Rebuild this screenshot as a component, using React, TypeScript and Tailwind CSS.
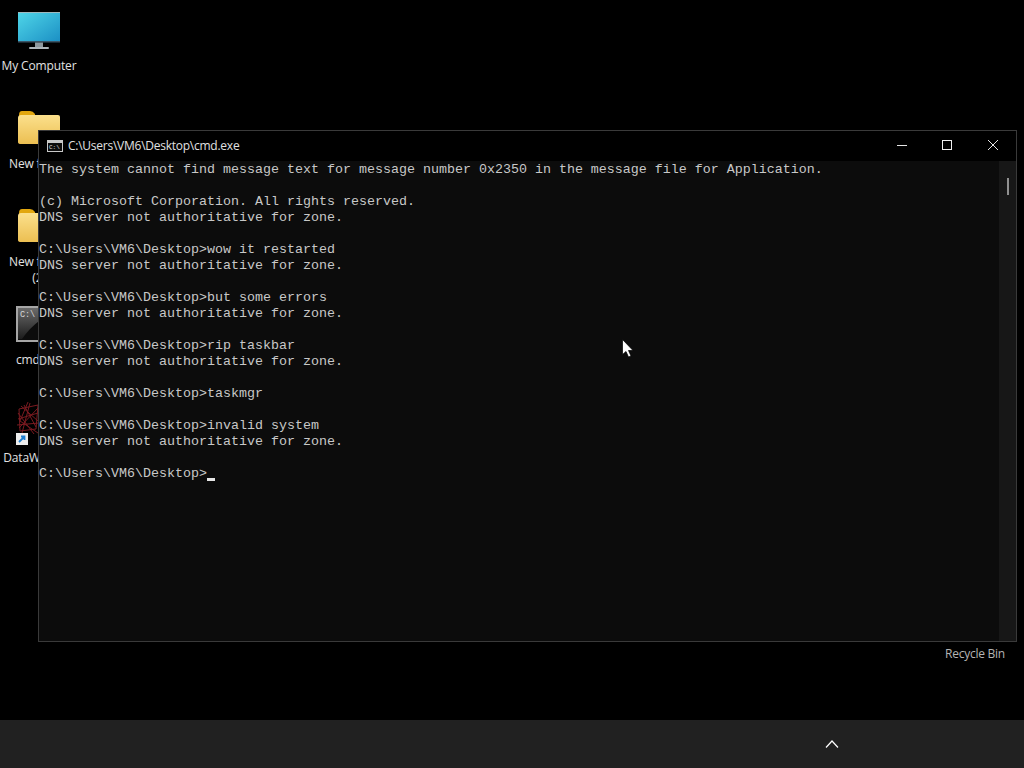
import React from "react";

const lines = [
  "The system cannot find message text for message number 0x2350 in the message file for Application.",
  "",
  "(c) Microsoft Corporation. All rights reserved.",
  "DNS server not authoritative for zone.",
  "",
  "C:\\Users\\VM6\\Desktop>wow it restarted",
  "DNS server not authoritative for zone.",
  "",
  "C:\\Users\\VM6\\Desktop>but some errors",
  "DNS server not authoritative for zone.",
  "",
  "C:\\Users\\VM6\\Desktop>rip taskbar",
  "DNS server not authoritative for zone.",
  "",
  "C:\\Users\\VM6\\Desktop>taskmgr",
  "",
  "C:\\Users\\VM6\\Desktop>invalid system",
  "DNS server not authoritative for zone.",
  "",
];

function Folder() {
  return (
    <svg className="mt-[1px]" width="42" height="34" viewBox="0 0 42 34">
      <defs>
        <linearGradient id="fg" x1="0" y1="0" x2="0" y2="1">
          <stop offset="0" stopColor="#fbe08c" />
          <stop offset="1" stopColor="#ecbf52" />
        </linearGradient>
      </defs>
      <path d="M1 4 Q1 0 4 0 H12 Q15 0 17 3 V5 H1 Z" fill="#e2a70f" />
      <path d="M0 7 Q0 4 3 4 H40 Q42 4 42 6 V32 Q42 33 40 33 H3 Q0 33 0 31 Z" fill="url(#fg)" />
    </svg>
  );
}

function Tile({
  icon,
  label,
  lines2,
  labelClass,
}: {
  icon: React.ReactNode;
  label: string;
  lines2?: string;
  labelClass?: string;
}) {
  return (
    <div className="flex h-[98px] w-[78px] shrink-0 flex-col items-center text-center text-[12px] leading-[17px] tracking-[-0.15px] text-[#e2e2e2]">
      <div className="flex h-[45px] w-full shrink-0 flex-col items-center">{icon}</div>
      <div className={labelClass ?? "whitespace-nowrap"}>{label}</div>
      {lines2 ? <div className="-mt-[1px] whitespace-nowrap">{lines2}</div> : null}
    </div>
  );
}

export default function App() {
  return (
    <div className="flex h-[768px] w-[1024px] flex-col overflow-hidden bg-black font-['Open_Sans','Noto_Sans',sans-serif]">
      <div className="relative flex-1">
        {/* Desktop icon column; the console window lies over its right part */}
        <div className="flex w-[78px] flex-col pt-[12px]">
          <Tile
            label="My Computer"
            icon={
              <svg width="42" height="38" viewBox="0 0 42 38">
                <defs>
                  <linearGradient id="mon" x1="0" y1="0" x2="1" y2="1">
                    <stop offset="0" stopColor="#4fd6e8" />
                    <stop offset="1" stopColor="#1b8fc4" />
                  </linearGradient>
                </defs>
                <rect x="0" y="0" width="42" height="30" rx="1" fill="url(#mon)" />
                <rect x="0" y="0" width="42" height="1" fill="#9fb8bd" />
                <rect x="0" y="29" width="42" height="1.5" fill="#3b5566" />
                <rect x="17" y="30.5" width="8" height="5" fill="#8d989e" />
                <rect x="11" y="35" width="20" height="2" rx="1" fill="#aeb6bb" />
              </svg>
            }
          />
          <Tile label="New folder" icon={<Folder />} />
          <Tile label="New folder" lines2="(2)" icon={<Folder />} />
          <Tile
            label="cmd.exe"
            icon={
              <svg width="46" height="36" viewBox="0 0 46 36">
                <defs>
                  <linearGradient id="sheen" x1="0" y1="0" x2="0" y2="1">
                    <stop offset="0" stopColor="#6a6a6a" />
                    <stop offset="1" stopColor="#1c1c1c" />
                  </linearGradient>
                </defs>
                <rect x="1" y="1" width="44" height="34" fill="#0c0c0c" stroke="#a6a6a6" strokeWidth="2" />
                <path d="M2 2 H44 V6 Q22 10 6 33 H2 Z" fill="url(#sheen)" />
                <text x="4" y="11" fontSize="8.5" fontFamily="Liberation Mono" fill="#d8d8d8">C:\</text>
              </svg>
            }
          />
          <Tile
            label="DataWedge"
            labelClass="mr-[8px] whitespace-nowrap"
            icon={
              <div className="relative -mt-[3px] h-[46px] w-[46px]">
                <svg width="46" height="34" viewBox="0 0 46 34">
                  <g stroke="#7a1a20" strokeWidth="1" fill="none">
                    <path d="M3 8 L22 4 L20 28 L4 30 Z" />
                    <path d="M12 1 L4 20 L22 32 M2 18 L22 12 M8 4 L20 26 M14 2 L6 32 M1 24 L23 22 M5 5 L22 20 M2 12 L18 33 M22 7 L3 27" />
                  </g>
                </svg>
                <svg className="absolute bottom-[2px] left-0" width="12" height="12" viewBox="0 0 12 12">
                  <rect width="12" height="12" fill="#ededed" />
                  <path d="M3 9 L8 4 M5 3.5 H8.5 V7" stroke="#1e7fd0" strokeWidth="1.8" fill="none" />
                </svg>
              </div>
            }
          />
        </div>

        {/* Recycle Bin label: the icon itself is behind the window */}
        <div className="absolute left-[945px] top-[645px] text-[12px] leading-[17px] tracking-[-0.25px] text-[#b4b4b4]">Recycle Bin</div>

        {/* Console window */}
        <div className="absolute left-[38px] top-[130px] flex h-[512px] w-[979px] flex-col border border-[#3a3a3a] bg-black">
          <div className="flex h-[30px] shrink-0 items-center bg-black">
            <svg className="ml-[8px]" width="16" height="14" viewBox="0 0 16 14">
              <rect x="0.5" y="1.5" width="15" height="11" fill="#0c0c0c" stroke="#c8c8c8" />
              <rect x="1" y="2" width="14" height="2" fill="#c8c8c8" />
              <text x="2" y="10" fontSize="6" fontFamily="Liberation Mono" fill="#e0e0e0">C:\</text>
            </svg>
            <span className="ml-[5px] text-[12px] tracking-[-0.25px] text-[#e0e0e0]">C:\Users\VM6\Desktop\cmd.exe</span>
            <div className="ml-auto flex h-full items-center pb-[2px]">
              <svg className="mr-[35px]" width="10" height="10" viewBox="0 0 10 10">
                <path d="M0 5.5 H10" stroke="#e6e6e6" strokeWidth="1" />
              </svg>
              <svg className="mr-[36px]" width="10" height="10" viewBox="0 0 10 10">
                <rect x="0.5" y="0.5" width="9" height="9" fill="none" stroke="#f0f0f0" strokeWidth="1" />
              </svg>
              <svg className="mr-[18px]" width="10" height="10" viewBox="0 0 10 10">
                <path d="M0 0 L10 10 M10 0 L0 10" stroke="#e6e6e6" strokeWidth="1" />
              </svg>
            </div>
          </div>
          <div className="flex min-h-0 flex-1">
            <div className="flex-1 overflow-hidden bg-[#0c0c0c] pt-[1px] font-['Liberation_Mono',monospace] text-[13.33px] leading-[16px] text-[#c8c8c8]">
              {lines.map((l, i) => (
                <div key={i} className="h-[16px] whitespace-pre">
                  {l}
                </div>
              ))}
              <div className="flex h-[16px] items-end whitespace-pre">
                <span>C:\Users\VM6\Desktop&gt;</span>
                <span className="mb-[1px] h-[3px] w-[8px] bg-[#e6e6e6]" />
              </div>
            </div>
            <div className="flex w-[17px] shrink-0 flex-col items-center bg-[#171717] pl-[1px] pt-[17px]">
              <div className="h-[17px] w-[2px] bg-[#909090]" />
            </div>
          </div>
        </div>

        {/* Mouse cursor */}
        <svg className="absolute left-[622px] top-[339px]" width="12" height="19" viewBox="0 0 12 19">
          <path d="M0.5 0.5 V15.5 L4 12.5 L6.5 18 L9 17 L6.5 11.5 H11 Z" fill="#ffffff" stroke="#000000" strokeWidth="0.7" />
        </svg>
      </div>

      {/* Taskbar */}
      <div className="flex h-[48px] shrink-0 items-center justify-end bg-[#212121] pr-[185px]">
        <svg width="14" height="10" viewBox="0 0 14 10">
          <path d="M1 8.5 L7 2 L13 8.5" fill="none" stroke="#ffffff" strokeWidth="1.2" />
        </svg>
      </div>
    </div>
  );
}
